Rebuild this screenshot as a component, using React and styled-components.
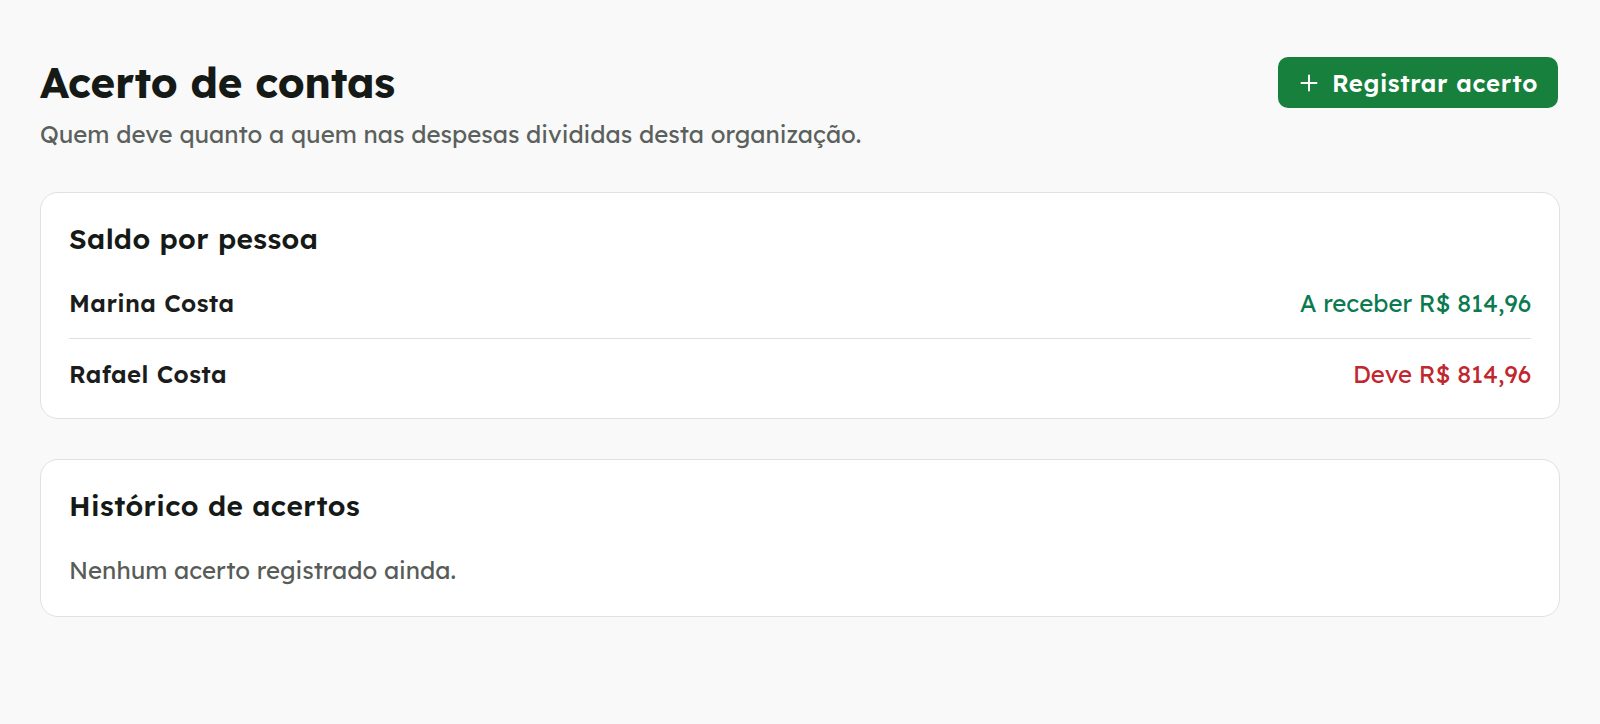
import React from "react";
import styled, { createGlobalStyle } from "styled-components";

const GlobalStyle = createGlobalStyle`
  html, body {
    margin: 0;
    padding: 0;
    background: #f8f9f8;
  }
  body {
    font-family: "Lexend", "Open Sans", "Noto Sans", sans-serif;
    color: #171b18;
    -webkit-font-smoothing: antialiased;
  }
  * { box-sizing: border-box; }
`;

const Page = styled.main`
  padding: 57px 40px 40px;
  display: flex;
  flex-direction: column;
`;

const TitleRow = styled.header`
  display: flex;
  align-items: center;
  justify-content: space-between;
  height: 51px;
`;

const Title = styled.h1`
  margin: 0;
  font-size: 42px;
  line-height: 51px;
  font-weight: 700;
  color: #161a17;
  letter-spacing: -0.3px;
`;

const Subtitle = styled.p`
  margin: 10px 0 0;
  font-size: 24px;
  line-height: 32px;
  font-weight: 400;
  color: #5b605c;
`;

const PrimaryButton = styled.button`
  display: flex;
  align-items: center;
  gap: 14px;
  height: 51px;
  margin-right: 2px;
  padding: 0 20px 0 22px;
  border: none;
  border-radius: 10px;
  background: #17803c;
  color: #ffffff;
  font-family: inherit;
  font-size: 24px;
  font-weight: 600;
  letter-spacing: 0.6px;
  cursor: pointer;
`;

const Card = styled.section`
  display: flex;
  flex-direction: column;
  margin-top: ${(p) => p.$mt}px;
  background: #ffffff;
  border: 1px solid #dfe2e0;
  border-radius: 18px;
  padding: 28px 28px ${(p) => p.$pb || 28}px;
`;

const CardTitle = styled.h2`
  margin: 0 0 11px;
  font-size: 28px;
  line-height: 36px;
  font-weight: 600;
  letter-spacing: 0.4px;
  color: #161a17;
`;

const List = styled.div`
  display: flex;
  flex-direction: column;
`;

const Row = styled.div`
  display: flex;
  align-items: center;
  justify-content: space-between;
  padding: 19px 0;
  border-bottom: 1px solid #dcdfdd;

  &:last-child {
    border-bottom: none;
    padding-bottom: 0;
  }
`;

const Name = styled.span`
  font-size: 24px;
  line-height: 32px;
  font-weight: 600;
  letter-spacing: 0.4px;
  color: #1a1d1b;
`;

const Amount = styled.span`
  font-size: 24px;
  line-height: 32px;
  font-weight: 400;
  color: ${(p) => (p.$tone === "positive" ? "#0b7a50" : "#c1272e")};
`;

const Empty = styled.p`
  margin: 19px 0 0;
  font-size: 24px;
  line-height: 32px;
  font-weight: 400;
  color: #575c58;
`;

const PlusIcon = () => (
  <svg width="18" height="18" viewBox="0 0 18 18" fill="none" stroke="currentColor" strokeWidth="2" strokeLinecap="round">
    <path d="M9 1.5v15M1.5 9h15" />
  </svg>
);

const balances = [
  { name: "Marina Costa", label: "A receber R$ 814,96", tone: "positive" },
  { name: "Rafael Costa", label: "Deve R$ 814,96", tone: "negative" },
];

export default function App() {
  return (
    <>
      <GlobalStyle />
      <Page>
        <TitleRow>
          <Title>Acerto de contas</Title>
          <PrimaryButton>
            <PlusIcon />
            Registrar acerto
          </PrimaryButton>
        </TitleRow>
        <Subtitle>Quem deve quanto a quem nas despesas divididas desta organização.</Subtitle>

        <Card $mt={42}>
          <CardTitle>Saldo por pessoa</CardTitle>
          <List>
            {balances.map((b) => (
              <Row key={b.name}>
                <Name>{b.name}</Name>
                <Amount $tone={b.tone}>{b.label}</Amount>
              </Row>
            ))}
          </List>
        </Card>

        <Card $mt={40} $pb={30}>
          <CardTitle>Histórico de acertos</CardTitle>
          <Empty>Nenhum acerto registrado ainda.</Empty>
        </Card>
      </Page>
    </>
  );
}
